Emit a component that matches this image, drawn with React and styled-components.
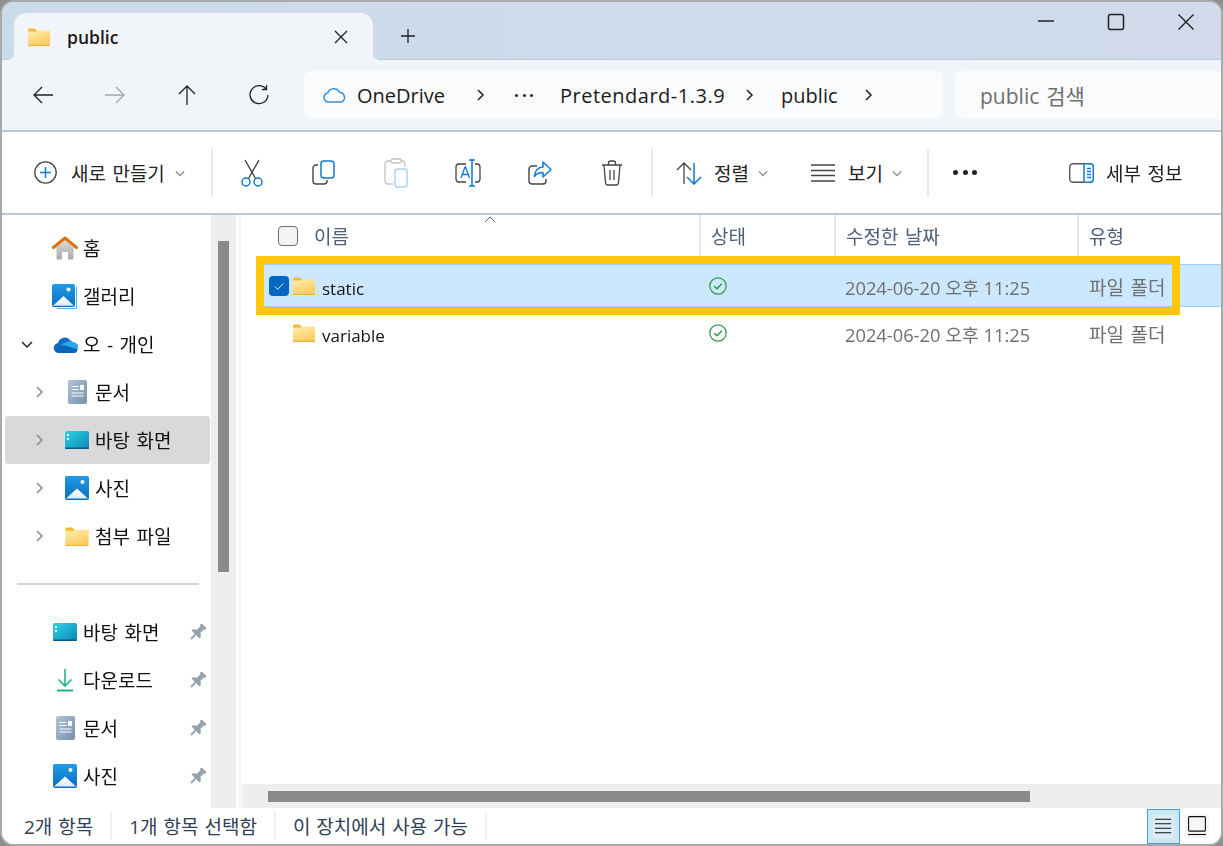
import styled, { createGlobalStyle } from 'styled-components';

const GlobalStyle = createGlobalStyle`
  html, body {
    margin: 0;
    height: 100%;
    background: #8e8e8e;
  }
  * {
    box-sizing: border-box;
  }
  body {
    font-family: "Open Sans", "Noto Sans CJK KR", sans-serif;
    font-size: 19px;
    word-spacing: 1.5px;
    color: #1a1a1a;
    overflow: hidden;
  }
`;

const Gradients = () => (
  <svg width="0" height="0" aria-hidden="true">
    <defs>
      <linearGradient id="folderFill" x1="0" y1="0" x2="0.4" y2="1">
        <stop offset="0" stopColor="#ffeeb0" />
        <stop offset="1" stopColor="#fdcb60" />
      </linearGradient>
      <linearGradient id="homeFill" x1="0" y1="0" x2="0" y2="1">
        <stop offset="0" stopColor="#dcdcdc" />
        <stop offset="1" stopColor="#a9a9a9" />
      </linearGradient>
      <linearGradient id="docFill" x1="0" y1="0" x2="1" y2="1">
        <stop offset="0" stopColor="#b1c3d6" />
        <stop offset="1" stopColor="#7690ad" />
      </linearGradient>
      <linearGradient id="deskFill" x1="0" y1="0" x2="1" y2="1">
        <stop offset="0" stopColor="#2fd3e4" />
        <stop offset="1" stopColor="#0c86b8" />
      </linearGradient>
      <linearGradient id="photoFill" x1="0" y1="0" x2="0" y2="1">
        <stop offset="0" stopColor="#1d9be6" />
        <stop offset="1" stopColor="#0b6cc0" />
      </linearGradient>
      <linearGradient id="peakFill" x1="0" y1="0" x2="0" y2="1">
        <stop offset="0" stopColor="#ffffff" />
        <stop offset="1" stopColor="#dcecf8" />
      </linearGradient>
    </defs>
  </svg>
);

const FolderIcon = ({ w = 22, h = 18 }) => (
  <svg width={w} height={h} viewBox="0 0 22 18">
    <path d="M0 2a1.5 1.5 0 0 1 1.5-1.5h5L9 3h13v2H0z" fill="#f6b92c" />
    <path d="M0 3.5h8.5L10 2.5h12V17a1 1 0 0 1-1 1H1a1 1 0 0 1-1-1z" fill="url(#folderFill)" />
    <path d="M0 17h22v.2a.8.8 0 0 1-.8.8H.8a.8.8 0 0 1-.8-.8z" fill="#f0ae32" />
  </svg>
);

const HomeIcon = () => (
  <svg width="26" height="24" viewBox="0 0 26 24">
    <path d="M4.5 11 13 3.5 21.5 11v11.5a1 1 0 0 1-1 1H16V16h-6v7.500H5.500a1 1 0 0 1-1-1z" fill="url(#homeFill)" />
    <path d="M1.500 11.500 13 2l11.500 9.500" fill="none" stroke="#e2700f" strokeWidth="3" strokeLinecap="round" strokeLinejoin="round" />
  </svg>
);

const PhotoIcon = ({ size = 24 }) => (
  <svg width={size} height={size} viewBox="0 0 24 24">
    <rect width="24" height="24" rx="2" fill="url(#photoFill)" />
    <path d="M1 22.500 12 12.500l11 10z" fill="url(#peakFill)" />
    <circle cx="17.500" cy="6" r="2" fill="#fff" />
  </svg>
);

const GalleryIcon = () => (
  <svg width="26" height="25" viewBox="0 0 26 25">
    <path d="M24.500 3v20a1.500 1.500 0 0 1-1.500 1.500H5" fill="none" stroke="#6aa9dc" strokeWidth="1.200" />
    <rect width="23" height="23" rx="2" fill="url(#photoFill)" />
    <path d="M1 21.800 11.500 12 22 21.800z" fill="url(#peakFill)" />
    <circle cx="16.500" cy="5.500" r="2" fill="#fff" />
  </svg>
);

const OneDriveIcon = () => (
  <svg width="25" height="17" viewBox="0 0 25 17">
    <path d="M5 7a7 7 0 0 1 12.500-2.500L10 10 1 13.500A5 5 0 0 1 5 7z" fill="#0f6cc4" />
    <path d="M17.500 4.500A6 6 0 0 1 20 6.300L25 12 14 12 8 8z" fill="#1490df" />
    <path d="M20 6.300a4.800 4.800 0 0 1 5 6.200L13 17 8 9l5-2.500a8 8 0 0 1 7-.200z" fill="#28a8ea" />
    <path d="M1 13.500 10 9l14.500 4.200A4 4 0 0 1 21 17H5a5 5 0 0 1-4-3.500z" fill="#0a64b4" />
  </svg>
);

const DocIcon = () => (
  <svg width="19" height="24" viewBox="0 0 19 24">
    <rect width="19" height="24" rx="2" fill="url(#docFill)" />
    <path d="M3.500 6.500h7M3.500 9.500h7M3.500 13h12M3.500 16h12" stroke="#fff" strokeWidth="1.200" />
    <rect x="12" y="5" width="4" height="5" fill="#fff" />
  </svg>
);

const DesktopIcon = () => (
  <svg width="24" height="18" viewBox="0 0 24 18">
    <rect width="24" height="18" rx="1.500" fill="url(#deskFill)" />
    <rect x="2" y="3" width="2" height="2" fill="#fff" />
    <rect x="2" y="7" width="2" height="2" fill="#fff" />
    <path d="M0 16.500h24V17a1 1 0 0 1-1 1H1a1 1 0 0 1-1-1z" fill="#0a5a86" />
  </svg>
);

const DownloadIcon = () => (
  <svg width="18" height="24" viewBox="0 0 18 24">
    <path d="M9 1v17M2.500 11.500 9 18l6.500-6.500" fill="none" stroke="#22b38e" strokeWidth="1.600" />
    <path d="M1 22.500h16" stroke="#22b38e" strokeWidth="2" />
  </svg>
);

const PinIcon = () => (
  <svg width="17" height="17" viewBox="0 0 18 18">
    <g transform="rotate(45 9 9)" fill="#96a2ad">
      <path d="M5 -1h8v2l-1.500 1v5l3.500 3v2H3v-2l3.500-3V2L5 1z" />
      <path d="M8 12h2v6l-1 1.500L8 18z" />
    </g>
  </svg>
);

const Chevron = ({ dir = 'right', size = 12, color = '#8a8a8a', width = 1.500 }) => {
  const paths = {
    right: 'M4 1l5 5-5 5',
    down: 'M1 4l5 5 5-5',
    up: 'M1 8l5-5 5 5',
  };
  return (
    <svg width={size} height={size} viewBox="0 0 12 12">
      <path d={paths[dir]} fill="none" stroke={color} strokeWidth={width} />
    </svg>
  );
};

const StatusCheck = () => (
  <svg width="18" height="18" viewBox="0 0 18 18">
    <circle cx="9" cy="9" r="8.200" fill="none" stroke="#2a9a47" strokeWidth="1.200" />
    <path d="M5.200 9.200 8 11.800l4.800-5" fill="none" stroke="#2a9a47" strokeWidth="1.500" />
  </svg>
);

const Line = ({ d, color = '#1f1f1f', w = 1.300, size = 24, box = 24 }) => (
  <svg width={size} height={size} viewBox={`0 0 ${box} ${box}`}>
    <path d={d} fill="none" stroke={color} strokeWidth={w} />
  </svg>
);

const CutIcon = () => (
  <svg width="24" height="28" viewBox="0 0 24 28">
    <path d="M5 1l10.500 18.500M19 1 8.500 19.500" fill="none" stroke="#3a3a3a" strokeWidth="1.300" />
    <circle cx="6" cy="23" r="4" fill="none" stroke="#0f78d4" strokeWidth="1.500" />
    <circle cx="18" cy="23" r="4" fill="none" stroke="#0f78d4" strokeWidth="1.500" />
  </svg>
);

const CopyIcon = () => (
  <svg width="24" height="26" viewBox="0 0 24 26">
    <path d="M6 5H4a3 3 0 0 0-3 3v13a3 3 0 0 0 3 3h8a3 3 0 0 0 3-3v-1" fill="none" stroke="#444" strokeWidth="1.400" />
    <rect x="9" y="1" width="13" height="17" rx="3" fill="none" stroke="#0f78d4" strokeWidth="1.500" />
  </svg>
);

const PasteIcon = () => (
  <svg width="24" height="30" viewBox="0 0 24 30">
    <path d="M7 3H4a3 3 0 0 0-3 3v17a3 3 0 0 0 3 3h5M17 3h1a3 3 0 0 1 3 3v3" fill="none" stroke="#c4c4c4" strokeWidth="1.300" />
    <rect x="7" y="1" width="10" height="4" rx="1.500" fill="none" stroke="#c4c4c4" strokeWidth="1.300" />
    <rect x="11" y="11" width="12" height="18" rx="2.500" fill="none" stroke="#a9d0ee" strokeWidth="1.400" />
  </svg>
);

const RenameIcon = () => (
  <svg width="26" height="28" viewBox="0 0 26 28">
    <path d="M11 5H4a3 3 0 0 0-3 3v12a3 3 0 0 0 3 3h7M20 5h2a3 3 0 0 1 3 3v12a3 3 0 0 1-3 3h-2" fill="none" stroke="#444" strokeWidth="1.300" />
    <path d="M6 19l4-11h.500l4 11M7.300 15.500h6" fill="none" stroke="#0f78d4" strokeWidth="1.300" />
    <path d="M17 1v26M14 1h6M14 27h6" fill="none" stroke="#0f78d4" strokeWidth="1.500" />
  </svg>
);

const ShareIcon = () => (
  <svg width="24" height="26" viewBox="0 0 24 26">
    <path d="M9 6H4a3 3 0 0 0-3 3v12a3 3 0 0 0 3 3h11a3 3 0 0 0 3-3v-2" fill="none" stroke="#444" strokeWidth="1.400" />
    <path d="M15 2l8 7.500-8 7.500v-4.500c-4 0-6.500 1-8.500 4 .2-5.500 3.500-9 8.500-9.500z" fill="none" stroke="#0f78d4" strokeWidth="1.500" strokeLinejoin="round" />
  </svg>
);

const TrashIcon = () => (
  <svg width="22" height="26" viewBox="0 0 22 26">
    <path d="M1 5h20M7.500 5V3a2 2 0 0 1 2-2h3a2 2 0 0 1 2 2v2M3 5l1.500 17.500a2.500 2.500 0 0 0 2.500 2.500h8a2.500 2.500 0 0 0 2.500-2.500L19 5M9 10v10M13 10v10" fill="none" stroke="#444" strokeWidth="1.300" />
  </svg>
);

const SortIcon = () => (
  <svg width="26" height="24" viewBox="0 0 26 24">
    <path d="M8 23V2M1 9l7-7 7 7" fill="none" stroke="#444" strokeWidth="1.300" />
    <path d="M18 2v21M11 16l7 7 7-7" fill="none" stroke="#0f78d4" strokeWidth="1.500" />
  </svg>
);

const ViewIcon = () => (
  <svg width="24" height="18" viewBox="0 0 24 18">
    <path d="M0 1h24M0 6.500h24M0 11.500h24M0 17h24" stroke="#444" strokeWidth="1.300" />
  </svg>
);

const DetailsIcon = () => (
  <svg width="25" height="20" viewBox="0 0 25 20">
    <rect x="0.700" y="0.700" width="23.600" height="18.600" rx="3.500" fill="none" stroke="#555" strokeWidth="1.400" />
    <path d="M15 .7h6a3.500 3.500 0 0 1 3.300 3.500v11.600a3.500 3.500 0 0 1-3.300 3.500h-6z" fill="#fff" stroke="#0f78d4" strokeWidth="1.500" />
    <path d="M18 5.500h4M18 8.500h4M18 11.500h4M18 14.500h4" stroke="#0f78d4" strokeWidth="1.300" />
  </svg>
);

const SIDE_ITEMS_TOP = [
  { label: '홈', icon: <HomeIcon /> },
  { label: '갤러리', icon: <GalleryIcon /> },
  { label: '오 - 개인', icon: <OneDriveIcon />, open: true },
  { label: '문서', icon: <DocIcon />, level: 1, arrow: true },
  { label: '바탕 화면', icon: <DesktopIcon />, level: 1, arrow: true, selected: true },
  { label: '사진', icon: <PhotoIcon />, level: 1, arrow: true },
  { label: '첨부 파일', icon: <FolderIcon w={24} h={19} />, level: 1, arrow: true },
];

const SIDE_ITEMS_PINNED = [
  { label: '바탕 화면', icon: <DesktopIcon /> },
  { label: '다운로드', icon: <DownloadIcon /> },
  { label: '문서', icon: <DocIcon /> },
  { label: '사진', icon: <PhotoIcon /> },
];

const FILES = [
  { name: 'static', selected: true },
  { name: 'variable' },
];

function SideRow({ item, pinned }) {
  const level = item.level ?? 0;
  return (
    <SideItem $selected={item.selected}>
      <SideChevron $level={level}>
        {item.open && <Chevron dir="down" color="#222" />}
        {item.arrow && <Chevron />}
      </SideChevron>
      <SideIcon>{item.icon}</SideIcon>
      <SideLabel>{item.label}</SideLabel>
      {pinned && <PinSlot><PinIcon /></PinSlot>}
    </SideItem>
  );
}

export default function App() {
  return (
    <>
      <GlobalStyle />
      <Gradients />
      <Window>
        <TitleBar>
          <Tab>
            <FolderIcon />
            <TabTitle>public</TabTitle>
            <TabClose>
              <Line d="M2 2l12 12M14 2 2 14" size={16} box={16} />
            </TabClose>
          </Tab>
          <NewTab>
            <Line d="M8 1v14M1 8h14" size={16} box={16} />
          </NewTab>
          <WinButtons>
            <WinButton>
              <Line d="M1 8h16" size={18} box={18} w={1.400} />
            </WinButton>
            <WinButton>
              <svg width="18" height="18" viewBox="0 0 18 18">
                <rect x="1.500" y="1.500" width="15" height="15" rx="2" fill="none" stroke="#1f1f1f" strokeWidth="1.500" />
              </svg>
            </WinButton>
            <WinButton>
              <Line d="M1.500 1.500l15 15M16.500 1.500l-15 15" size={18} box={18} w={1.400} />
            </WinButton>
          </WinButtons>
        </TitleBar>

        <NavBar>
          <NavButton><Line d="M22 12H3M11 4l-8 8 8 8" /></NavButton>
          <NavButton><Line d="M2 12h19M13 4l8 8-8 8" color="#a3a7ab" /></NavButton>
          <NavButton><Line d="M12 22V3M4 11l8-8 8 8" /></NavButton>
          <NavButton><Line d="M19 6a9 9 0 1 0 2 6M19.500 2v4.500H15" /></NavButton>
          <AddressBox>
            <svg width="23" height="16" viewBox="0 0 23 16">
              <path d="M5.500 15a4.500 4.500 0 0 1-.8-8.900A6.500 6.500 0 0 1 16.800 5.600 4.800 4.800 0 0 1 18 15z" fill="none" stroke="#3b8fd6" strokeWidth="1.500" />
            </svg>
            <Crumb $ml={11}>OneDrive</Crumb>
            <CrumbArrow $w={70}><Chevron color="#222" /></CrumbArrow>
            <CrumbDots><i /><i /><i /></CrumbDots>
            <Crumb $ml={27} $ls={0.5}>Pretendard-1.3.9</Crumb>
            <CrumbArrow $w={48}><Chevron color="#222" /></CrumbArrow>
            <Crumb $ml={8}>public</Crumb>
            <CrumbArrow $w={60}><Chevron color="#222" /></CrumbArrow>
          </AddressBox>
          <SearchBox>public 검색</SearchBox>
        </NavBar>

        <Toolbar>
          <ToolGroup $pl={32} $w={209}>
            <svg width="23" height="23" viewBox="0 0 23 23">
              <circle cx="11.500" cy="11.500" r="10.700" fill="none" stroke="#444" strokeWidth="1.300" />
              <path d="M11.500 6v11M6 11.500h11" stroke="#0f78d4" strokeWidth="1.500" />
            </svg>
            <ToolLabel $ml={14}>새로 만들기</ToolLabel>
            <MenuArrow $ml={10}><Chevron dir="down" size={10} /></MenuArrow>
          </ToolGroup>
          <Separator />
          <IconTool $first><CutIcon /></IconTool>
          <IconTool><CopyIcon /></IconTool>
          <IconTool><PasteIcon /></IconTool>
          <IconTool><RenameIcon /></IconTool>
          <IconTool><ShareIcon /></IconTool>
          <IconTool><TrashIcon /></IconTool>
          <Separator $ml={3} />
          <ToolGroup $pl={23} $w={158}>
            <SortIcon />
            <ToolLabel $ml={12}>정렬</ToolLabel>
            <MenuArrow $ml={9}><Chevron dir="down" size={10} /></MenuArrow>
          </ToolGroup>
          <ToolGroup $pl={0} $w={116}>
            <ViewIcon />
            <ToolLabel $ml={13}>보기</ToolLabel>
            <MenuArrow $ml={9}><Chevron dir="down" size={10} /></MenuArrow>
          </ToolGroup>
          <Separator />
          <MoreDots>
            <i /><i /><i />
          </MoreDots>
          <DetailsButton>
            <DetailsIcon />
            <ToolLabel $ml={12}>세부 정보</ToolLabel>
          </DetailsButton>
        </Toolbar>

        <Body>
          <Sidebar>
            {SIDE_ITEMS_TOP.map((item, i) => (
              <SideRow key={i} item={item} />
            ))}
            <SideDivider />
            {SIDE_ITEMS_PINNED.map((item, i) => (
              <SideRow key={i} item={item} pinned />
            ))}
          </Sidebar>
          <SideTrack>
            <SideThumb />
          </SideTrack>
          <Main>
            <SortCaret><Chevron dir="up" color="#666" width={1} /></SortCaret>
            <Header>
              <HeaderName>
                <HeadCheck />
                <HeadText>이름</HeadText>
              </HeaderName>
              <HeaderCell>상태</HeaderCell>
              <HeaderCell>수정한 날짜</HeaderCell>
              <HeaderCell $last>유형</HeaderCell>
            </Header>
            <FileList>
              {FILES.map((file) => (
                <FileRow key={file.name} $selected={file.selected}>
                  <NameCell>
                    <RowCheck $on={file.selected}>
                      {file.selected && <Line d="M3 8l3 3 6-6" color="#fff" w={1} size={14} box={15} />}
                    </RowCheck>
                    <FolderIcon />
                    <FileName>{file.name}</FileName>
                  </NameCell>
                  <StateCell><StatusCheck /></StateCell>
                  <DateCell>2024-06-20 오후 11:25</DateCell>
                  <TypeCell>파일 폴더</TypeCell>
                </FileRow>
              ))}
            </FileList>
            <HScroll>
              <HThumb />
            </HScroll>
            <Highlight />
          </Main>
        </Body>

        <StatusBar>
          <StatusText>2개 항목</StatusText>
          <StatusText>1개 항목 선택함</StatusText>
          <StatusText>이 장치에서 사용 가능</StatusText>
          <ViewSwitch>
            <ListViewBtn>
              <ListViewInner>
                <Line d="M0 2.500h18M0 7.500h18M0 12.500h18M0 17.500h18" color="#111" w={1.100} size={18} box={20} />
              </ListViewInner>
            </ListViewBtn>
            <ThumbViewBtn>
              <svg width="18" height="20" viewBox="0 0 18 20">
                <rect x="0.600" y="0.600" width="16.800" height="14.500" rx="1" fill="none" stroke="#111" strokeWidth="1.100" />
                <path d="M0 18.500h18" stroke="#111" strokeWidth="1.100" />
              </svg>
            </ThumbViewBtn>
          </ViewSwitch>
        </StatusBar>
      </Window>
    </>
  );
}

const Window = styled.div`
  position: fixed;
  inset: 0;
  display: flex;
  flex-direction: column;
  border: 2px solid #a9a9a9;
  border-radius: 14px;
  background: #fff;
  overflow: hidden;
`;

const TitleBar = styled.div`
  height: 58px;
  flex: none;
  display: flex;
  align-items: flex-start;
  padding-left: 12px;
  background: linear-gradient(90deg, #cbdbe9, #d1dbeb);
  border-bottom: 1px solid #bfcbdc;
`;

const Tab = styled.div`
  position: relative;
  width: 359px;
  height: 47px;
  margin-top: 11px;
  padding: 0 24px 0 14px;
  display: flex;
  align-items: center;
  background: #f1f5f9;
  border-radius: 12px 12px 0 0;

  &::before,
  &::after {
    content: '';
    position: absolute;
    bottom: 0;
    width: 6px;
    height: 6px;
  }
  &::before {
    left: -6px;
    background: radial-gradient(circle at 0 0, transparent 5.5px, #f1f5f9 6px);
  }
  &::after {
    right: -6px;
    background: radial-gradient(circle at 100% 0, transparent 5.5px, #f1f5f9 6px);
  }
`;

const TabTitle = styled.span`
  margin-left: 17px;
  font-weight: 600;
  font-size: 17.5px;
`;

const TabClose = styled.span`
  margin-left: auto;
  display: flex;
`;

const NewTab = styled.div`
  width: 70px;
  height: 46px;
  margin-top: 11px;
  display: flex;
  align-items: center;
  justify-content: center;
`;

const WinButtons = styled.div`
  margin-left: auto;
  display: flex;
`;

const WinButton = styled.div`
  width: 70px;
  height: 40px;
  display: flex;
  align-items: center;
  justify-content: center;
`;

const NavBar = styled.div`
  height: 72px;
  flex: none;
  display: flex;
  align-items: flex-start;
  padding: 11px 0 0 5px;
  background: #f1f5f9;
  border-bottom: 2px solid #bcc8d6;
`;

const NavButton = styled.div`
  width: 72px;
  height: 48px;
  flex: none;
  display: flex;
  align-items: center;
  justify-content: center;
`;

const AddressBox = styled.div`
  width: 639px;
  height: 48px;
  flex: none;
  margin-left: 9px;
  padding-left: 19px;
  display: flex;
  align-items: center;
  background: #fafbfd;
  border-radius: 8px;
`;

const Crumb = styled.span`
  margin-left: ${({ $ml }) => $ml}px;
  padding-top: 1px;
  letter-spacing: ${({ $ls }) => $ls ?? 0}px;
  font-size: 20px;
  white-space: nowrap;
`;

const CrumbArrow = styled.span`
  width: ${({ $w }) => $w}px;
  display: flex;
  justify-content: center;
`;

const CrumbDots = styled.span`
  width: 18px;
  display: flex;
  justify-content: space-between;

  i {
    width: 3px;
    height: 3px;
    border-radius: 50%;
    background: #222;
  }
`;

const SearchBox = styled.div`
  flex: 1;
  height: 48px;
  margin-left: 12px;
  padding-left: 25px;
  display: flex;
  align-items: center;
  background: #fafbfd;
  border-radius: 8px 0 0 8px;
  font-size: 21px;
  color: #6e6e6e;
`;

const Toolbar = styled.div`
  height: 83px;
  flex: none;
  display: flex;
  align-items: center;
  background: #fff;
  border-bottom: 2px solid #bcc8d6;
`;

const ToolGroup = styled.div`
  width: ${({ $w }) => $w}px;
  flex: none;
  display: flex;
  align-items: center;
  padding-left: ${({ $pl }) => $pl}px;
`;

const ToolLabel = styled.span`
  margin-left: ${({ $ml }) => $ml}px;
  white-space: nowrap;
  color: #222;
`;

const MenuArrow = styled.span`
  margin-left: ${({ $ml }) => $ml}px;
  display: flex;
`;

const Separator = styled.div`
  width: 2px;
  height: 48px;
  flex: none;
  margin-left: ${({ $ml }) => $ml ?? 0}px;
  background: #e9e9e9;
`;

const IconTool = styled.div`
  width: 72px;
  flex: none;
  margin-left: ${({ $first }) => ($first ? 3 : 0)}px;
  display: flex;
  justify-content: center;
  align-items: center;
`;

const MoreDots = styled.div`
  width: 24px;
  margin-left: 24px;
  display: flex;
  justify-content: space-between;

  i {
    width: 5px;
    height: 5px;
    border-radius: 50%;
    background: #222;
  }
`;

const DetailsButton = styled.div`
  margin-left: 92px;
  display: flex;
  align-items: center;
`;

const Body = styled.div`
  flex: 1;
  min-height: 0;
  display: flex;
  background: #fff;
`;

const Sidebar = styled.nav`
  width: 209px;
  flex: none;
  padding-top: 9px;
  overflow: hidden;
`;

const SideItem = styled.div`
  width: 205px;
  height: 48px;
  margin-left: 3px;
  display: flex;
  align-items: center;
  border-radius: 3px;
  background: ${({ $selected }) => ($selected ? '#d9d9d9' : 'transparent')};
`;

const SideChevron = styled.span`
  width: ${({ $level }) => 47 + $level * 12}px;
  flex: none;
  display: flex;
  padding-left: ${({ $level }) => 16 + $level * 12}px;
`;

const SideIcon = styled.span`
  width: 26px;
  flex: none;
  display: flex;
  justify-content: center;
`;

const SideLabel = styled.span`
  margin-left: 5px;
  color: #111;
  white-space: nowrap;
`;

const PinSlot = styled.span`
  margin-left: auto;
  margin-right: 4px;
  display: flex;
`;

const SideDivider = styled.div`
  height: 2px;
  margin: 23px 12px 23px 15px;
  background: #d6d6d6;
`;

const SideTrack = styled.div`
  width: 25px;
  flex: none;
  padding: 26px 7px 0;
  background: #eeeeee;
`;

const SideThumb = styled.div`
  width: 11px;
  height: 331px;
  background: #8a8a8a;
`;

const Main = styled.main`
  position: relative;
  flex: 1;
  min-width: 0;
  margin-left: 3px;
  padding-left: 1px;
  display: flex;
  flex-direction: column;
  border-left: 2px solid #f2f2f2;
`;

const Header = styled.div`
  display: grid;
  grid-template-columns: 459px 135px 243px 1fr;
  height: 49px;
  flex: none;
`;

const HeaderCell = styled.div`
  height: 43px;
  padding: 0 0 2px 10px;
  display: flex;
  align-items: center;
  color: #4d6079;
  border-right: ${({ $last }) => ($last ? 'none' : '2px solid #e5e5e5')};
`;

const HeaderName = styled(HeaderCell)`
  padding-left: 36px;
`;

const HeadCheck = styled.span`
  width: 20px;
  height: 20px;
  border: 1px solid #6e6e6e;
  border-radius: 4px;
  background: #f3f3f3;
`;

const HeadText = styled.span`
  margin-left: 16px;
`;

const SortCaret = styled.span`
  position: absolute;
  left: 243px;
  top: -1px;
  display: flex;
`;

const FileList = styled.div`
  flex: 1;
  min-height: 0;
  display: flex;
  flex-direction: column;
  gap: 4px;
`;

const FileRow = styled.div`
  display: grid;
  grid-template-columns: 436px 135px 243px 1fr;
  height: 43px;
  margin-left: 22px;
  align-items: center;
  background: ${({ $selected }) => ($selected ? '#cce8ff' : 'transparent')};
  border-top: 1px solid ${({ $selected }) => ($selected ? '#99d1ff' : 'transparent')};
  border-bottom: 1px solid ${({ $selected }) => ($selected ? '#99d1ff' : 'transparent')};
`;

const NameCell = styled.div`
  display: flex;
  align-items: center;
  padding-left: 5px;
  gap: 4px;
`;

const RowCheck = styled.span`
  width: 20px;
  height: 20px;
  flex: none;
  display: flex;
  align-items: center;
  justify-content: center;
  border-radius: 4px;
  background: ${({ $on }) => ($on ? '#0067c0' : 'transparent')};
`;

const FileName = styled.span`
  margin-left: 3px;
  padding-top: 6px;
  font-size: 17px;
  color: #111;
`;

const StateCell = styled.div`
  padding-left: 9px;
  display: flex;
`;

const DateCell = styled.div`
  padding: 3px 0 0 10px;
  font-size: 18.3px;
  word-spacing: 0;
  color: #6f6f6f;
  white-space: nowrap;
`;

const TypeCell = styled(DateCell)`
  padding-left: 11px;
  font-size: 19px;
  word-spacing: 1.5px;
`;

const HScroll = styled.div`
  height: 24px;
  flex: none;
  padding: 7px 0 0 26px;
  background: #eeeeee;
`;

const HThumb = styled.div`
  width: 762px;
  height: 11px;
  background: #8a8a8a;
`;

const Highlight = styled.div`
  position: absolute;
  left: 15px;
  top: 41px;
  width: 924px;
  height: 59px;
  border: 8px solid #ffc60b;
  pointer-events: none;
`;

const StatusBar = styled.footer`
  height: 36px;
  flex: none;
  display: flex;
  align-items: center;
  padding-left: 22px;
  background: #fff;
  font-size: 19px;
  word-spacing: 1px;
`;

const StatusText = styled.span`
  padding-right: 17px;
  margin-right: 17px;
  color: #2e4057;
  white-space: nowrap;
  border-right: 2px solid #f0f0f0;
`;

const ViewSwitch = styled.div`
  margin-left: auto;
  margin-right: 12px;
  display: flex;
  align-items: center;
  gap: 5px;
`;

const ListViewBtn = styled.div`
  width: 33px;
  height: 35px;
  padding: 5px;
  border: 1px solid #3fa0d8;
  background: #cce8f7;
`;

const ListViewInner = styled.div`
  height: 100%;
  display: flex;
  align-items: center;
  justify-content: center;
  background: #dcedf8;
`;

const ThumbViewBtn = styled.div`
  width: 24px;
  height: 24px;
  display: flex;
  align-items: center;
  justify-content: center;
  background: #f6f6f6;
  border-radius: 3px;
`;
